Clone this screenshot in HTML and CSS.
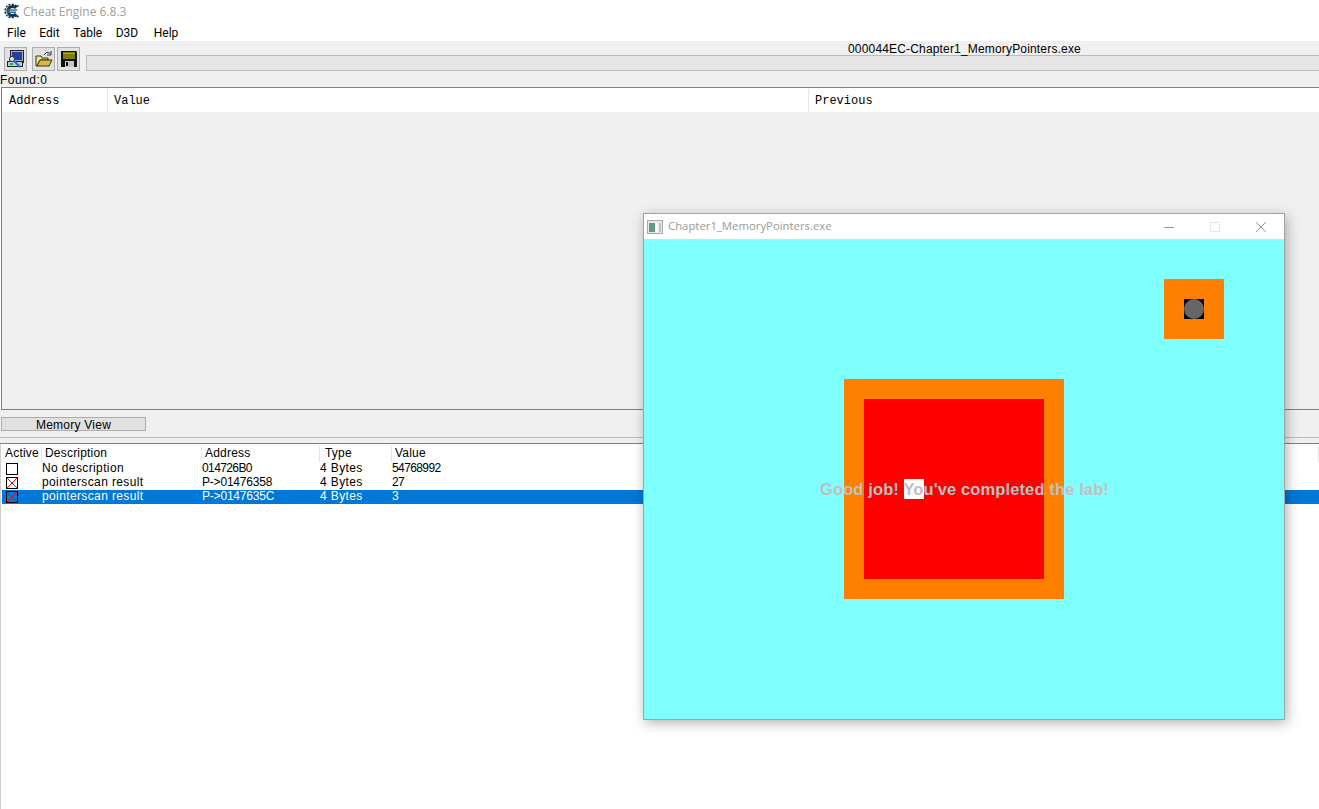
FILE: index.html

```html
<!DOCTYPE html>
<html lang="en">
<head>
  <meta charset="UTF-8">
  <title>Cheat Engine 6.8.3</title>
  <link rel="stylesheet" href="styles.css">
</head>
<body>
  <div class="titlebar">
    <svg class="logo" width="18" height="18" viewBox="0 0 18 18">
      <path d="M14.5 4.5 A6.6 6.6 0 1 0 14.5 13.5" fill="none" stroke="#14344c" stroke-width="1.6" stroke-dasharray="2 1.2"/>
      <path d="M14 6 A4.6 4.6 0 1 0 14 12" fill="none" stroke="#14344c" stroke-width="3"/>
      <path d="M5 8 H15 M5 10.2 H14" stroke="#2a6f96" stroke-width="1.4"/>
      <path d="M14.5 4.5 L16.5 3.5 M14.5 13.5 L16.5 15" stroke="#14344c" stroke-width="1.6"/>
    </svg>
    <span class="title-text">Cheat Engine 6.8.3</span>
  </div>

  <nav class="menu">
    <a>File</a>
    <a>Edit</a>
    <a>Table</a>
    <a>D3D</a>
    <a class="menu-help">Help</a>
  </nav>

  <div class="toolbar">
    <div class="tool-buttons">
      <button class="tool">
        <svg width="18" height="18" viewBox="0 0 18 18">
          <rect x="3.5" y="0.5" width="13" height="12" fill="#a9adb3" stroke="#222"/>
          <rect x="5" y="2" width="10" height="8" fill="#1f3fa6"/>
          <rect x="0.5" y="11.5" width="15" height="5" fill="#c8c8c8" stroke="#222"/>
          <circle cx="5" cy="9" r="2.6" fill="#cfe3f5" stroke="#333"/>
          <rect x="3" y="13" width="3" height="2" fill="#22b14c"/>
          <path d="M7 11 L13 17" stroke="#1d6fe0" stroke-width="2"/>
        </svg>
      </button>
      <button class="tool tool-open">
        <svg width="18" height="18" viewBox="0 0 18 18">
          <path d="M1 6 H6 L7 8 H13 V10 H5 L2 16 H1 Z" fill="#f5e27a" stroke="#333"/>
          <path d="M5 10 H17 L14 16 H2 Z" fill="#d9bb3c" stroke="#333"/>
          <path d="M9 5 Q11 1 15 3 M16 1 V5 H12" fill="none" stroke="#333"/>
        </svg>
      </button>
      <button class="tool tool-save">
        <svg width="18" height="18" viewBox="0 0 18 18">
          <path d="M1 1 H16 L17 2 V17 H1 Z" fill="#111"/>
          <rect x="3" y="2" width="12" height="7" fill="#808000"/>
          <rect x="3" y="3" width="12" height="1" fill="#a8a830"/>
          <rect x="5" y="11" width="9" height="6" fill="#c8c8c0"/>
          <rect x="6" y="12" width="2" height="4" fill="#111"/>
        </svg>
      </button>
    </div>
    <div class="progress-wrap">
      <div class="process-name">000044EC-Chapter1_MemoryPointers.exe</div>
      <div class="progress"></div>
    </div>
  </div>

  <div class="found">Found:0</div>

  <section class="results">
    <div class="results-head">
      <div class="rh-cell rh-address">Address</div>
      <div class="rh-cell rh-value">Value</div>
      <div class="rh-cell rh-previous">Previous</div>
    </div>
  </section>

  <div class="memory-row">
    <button class="memory-btn">Memory View</button>
  </div>
  <div class="splitter"></div>

  <section class="addresses">
    <div class="row row-head">
      <div class="head-cell head-active">Active</div>
      <div class="head-cell">Description</div>
      <div class="head-cell">Address</div>
      <div class="head-cell head-type">Type</div>
      <div class="head-cell">Value</div>
    </div>
    <div class="row">
      <div class="check-cell"><span class="check"></span></div>
      <div class="cell">No description</div>
      <div class="cell num">014726B0</div>
      <div class="cell">4 Bytes</div>
      <div class="cell num">54768992</div>
    </div>
    <div class="row">
      <div class="check-cell"><span class="check checked"></span></div>
      <div class="cell">pointerscan result</div>
      <div class="cell ptr">P-&gt;01476358</div>
      <div class="cell">4 Bytes</div>
      <div class="cell num">27</div>
    </div>
    <div class="row selected">
      <div class="check-cell"><span class="check checked"></span></div>
      <div class="cell">pointerscan result</div>
      <div class="cell ptr">P-&gt;0147635C</div>
      <div class="cell">4 Bytes</div>
      <div class="cell num">3</div>
    </div>
  </section>

  <!-- game window floats over the main window -->
  <div class="game-window">
    <div class="game-title">
      <svg class="game-icon" width="16" height="14" viewBox="0 0 16 14">
        <rect x="0.5" y="0.5" width="15" height="13" fill="#e8e8e8" stroke="#a8a8a8"/>
        <rect x="2" y="3" width="6" height="9" fill="#5f9a8f"/>
        <rect x="8" y="3" width="3" height="9" fill="#fff"/>
        <rect x="12" y="3" width="2" height="9" fill="#b8c8c0"/>
      </svg>
      <span class="game-name">Chapter1_MemoryPointers.exe</span>
      <div class="win-controls">
        <svg width="46" height="26" viewBox="0 0 46 26"><path d="M18 13.5 H28" stroke="#999"/></svg>
        <svg width="46" height="26" viewBox="0 0 46 26"><rect x="18.5" y="8.5" width="9" height="9" fill="none" stroke="#e6e6e6"/></svg>
        <svg width="46" height="26" viewBox="0 0 46 26"><path d="M18 8 L28 18 M28 8 L18 18" stroke="#999"/></svg>
      </div>
    </div>
    <div class="game-canvas">
      <div class="square big-orange"></div>
      <div class="square big-red"></div>
      <div class="square small-orange"></div>
      <div class="square small-black"></div>
      <div class="square small-dot"></div>
      <div class="square white-block"></div>
      <div class="game-msg">Good job! You've completed the lab!</div>
    </div>
  </div>
</body>
</html>
```

FILE: styles.css

```css
html, body {
  margin: 0;
  padding: 0;
  height: 809px;
  overflow: hidden;
}
body {
  position: relative;
  background-color: #fff;
  font-family: "Liberation Sans", Arial, sans-serif;
  font-size: 12px;
  color: #000;
}

.titlebar {
  display: flex;
  align-items: center;
  height: 22px;
  padding-left: 2px;
}
.logo {
  flex: none;
}
.title-text {
  margin-left: 3px;
  font-family: "Open Sans", sans-serif;
  font-size: 12px;
  color: #a0a0a0;
}

.menu {
  display: flex;
  height: 19px;
  box-sizing: border-box;
  padding: 2px 0 0 7px;
  align-items: center;
  gap: 13.5px;
  font-family: "Roboto", sans-serif;
  font-size: 12px;
}
.menu-help {
  margin-left: 2px;
}

.toolbar {
  display: flex;
  height: 31px;
  background-color: #f0f0f0;
  padding-left: 4px;
}
.tool-buttons {
  display: flex;
  padding-top: 6px;
}
.tool {
  width: 23px;
  height: 24px;
  padding: 0;
  margin-right: 5px;
  display: flex;
  align-items: center;
  justify-content: center;
  background-color: #e1e1e1;
  border: 1px solid #adadad;
}
.tool-open {
  margin-right: 2px;
}
.tool-save {
  margin-right: 6px;
}
.progress-wrap {
  flex: 1;
}
.process-name {
  height: 14px;
  line-height: 16px;
  padding-left: 762px;
  font-size: 12px;
  letter-spacing: 0.17px;
  white-space: nowrap;
}
.progress {
  height: 14px;
  background-color: #e6e6e6;
  border: 1px solid #bcbcbc;
  border-right: none;
}

.found {
  height: 15px;
  line-height: 16px;
  background-color: #f0f0f0;
  font-size: 12px;
  letter-spacing: 0.5px;
}

.results {
  height: 321px;
  background-color: #f0f0f0;
  border: 1px solid #808080;
  border-right: none;
  margin-left: 1px;
}
.results-head {
  display: flex;
  height: 24px;
  background-color: #fff;
  font-family: "Liberation Mono", monospace;
  font-size: 12px;
}
.rh-cell {
  padding: 6px 0 0 6px;
  border-right: 1px solid #e5e5e5;
}
.rh-address {
  width: 98px;
  padding-left: 7px;
}
.rh-value {
  width: 694px;
}
.rh-previous {
  border-right: none;
}

.memory-row {
  height: 27px;
  padding: 7px 0 0 1px;
  box-sizing: border-box;
  background-color: #f0f0f0;
}
.memory-btn {
  display: block;
  width: 145px;
  height: 14px;
  padding: 0;
  background-color: #e1e1e1;
  border: 1px solid #adadad;
  font-family: "Liberation Sans", sans-serif;
  font-size: 12px;
  line-height: 14px;
  letter-spacing: 0.25px;
  color: #000;
}

.splitter {
  height: 7px;
  background-color: #f0f0f0;
  border-top: 1px solid #bcbcbc;
  border-bottom: 1px solid #808080;
  box-sizing: border-box;
}

.addresses {
  height: 365px;
  border-left: 1px solid #d0d0d0;
}
.row {
  display: grid;
  grid-template-columns: 41px 160px 118px 72px 1fr;
  height: 14px;
  line-height: 13px;
  letter-spacing: 0.38px;
  white-space: nowrap;
}
.row-head {
  height: 18px;
  line-height: 14px;
  padding-top: 2px;
  box-sizing: border-box;
  letter-spacing: 0.2px;
}
.head-cell {
  padding-left: 3px;
  border-right: 1px solid #e5e5e5;
}
.head-active {
  padding-left: 4px;
}
.head-type {
  padding-left: 5px;
}
.cell {
  padding-left: 0;
}
.num {
  letter-spacing: -0.6px;
}
.ptr {
  letter-spacing: -0.2px;
}
.check-cell {
  padding: 1px 0 0 5px;
}
.check {
  display: block;
  width: 10px;
  height: 10px;
  border: 1px solid #000;
}
.checked {
  background:
    linear-gradient(45deg, transparent 46%, #f00 46%, #f00 54%, transparent 54%),
    linear-gradient(-45deg, transparent 46%, #f00 46%, #f00 54%, transparent 54%);
}
.selected {
  background-color: #0078d7;
  color: #fff;
  margin-left: 1px;
  grid-template-columns: 40px 160px 118px 72px 1fr;
}
.selected .check-cell {
  padding-left: 4px;
}

.game-window {
  position: absolute;
  left: 643px;
  top: 213px;
  width: 640px;
  border: 1px solid #a3a3a3;
  box-shadow: 2px 3px 12px rgba(0, 0, 0, 0.3);
  background-color: #fff;
}
.game-title {
  display: flex;
  align-items: center;
  height: 25px;
}
.game-icon {
  margin-left: 3px;
}
.game-name {
  margin: -2px 0 0 5px;
  font-family: "Open Sans", sans-serif;
  font-size: 11.35px;
  color: #9a9a9a;
}
.win-controls {
  display: flex;
  margin-left: auto;
}
.game-canvas {
  position: relative;
  height: 480px;
  background-color: #80ffff;
}
.square {
  position: absolute;
}
.big-orange {
  left: 200px;
  top: 140px;
  width: 220px;
  height: 220px;
  background-color: #ff8000;
}
.big-red {
  left: 220px;
  top: 160px;
  width: 180px;
  height: 180px;
  background-color: #f00;
}
.small-orange {
  left: 520px;
  top: 40px;
  width: 60px;
  height: 60px;
  background-color: #ff8000;
}
.small-black {
  left: 540px;
  top: 60px;
  width: 20px;
  height: 20px;
  background-color: #000;
}
.small-dot {
  left: 540px;
  top: 60px;
  width: 20px;
  height: 20px;
  border-radius: 50%;
  background-color: #666;
}
.white-block {
  left: 260px;
  top: 240px;
  width: 20px;
  height: 20px;
  background-color: #fff;
}
.game-msg {
  position: absolute;
  left: 176px;
  top: 240px;
  height: 20px;
  line-height: 20px;
  font-size: 16.5px;
  font-weight: bold;
  letter-spacing: 0.12px;
  color: #c0c0c0;
  white-space: nowrap;
}
```
